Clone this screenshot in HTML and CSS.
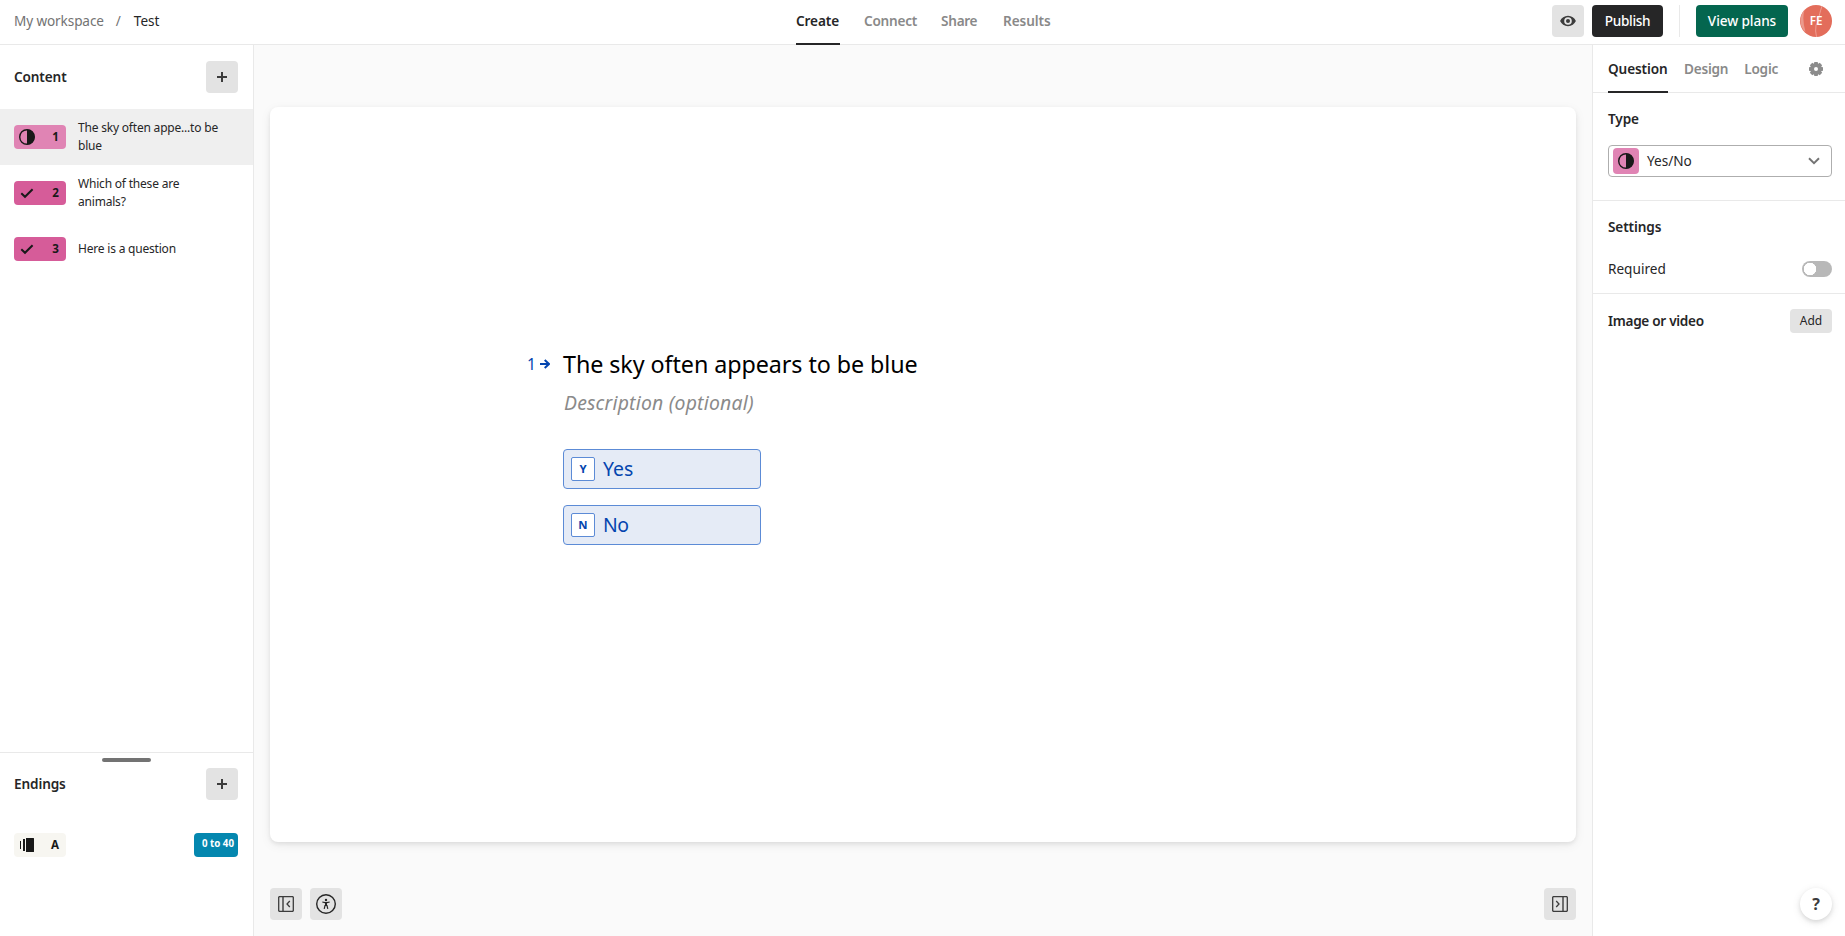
FILE: index.html
```
<!DOCTYPE html>
<html lang="en">
<head>
<meta charset="utf-8">
<title>Test</title>
<link rel="stylesheet" href="styles.css">
</head>
<body>
<svg width="0" height="0" class="defs">
  <symbol id="half" viewBox="0 0 16 16"><circle cx="8" cy="8" r="7.3" fill="none" stroke="#191919" stroke-width="1.4"/><path d="M8 .5a7.5 7.5 0 0 1 0 15z" fill="#191919"/></symbol>
  <symbol id="check" viewBox="0 0 14 12"><path d="M1.3 6.2 5 9.8 12.6 2.3" fill="none" stroke="#191919" stroke-width="2"/></symbol>
  <symbol id="plus" viewBox="0 0 10 10"><path d="M5 0v10M0 5h10" stroke="#3c3c3c" stroke-width="2"/></symbol>
  <symbol id="panel" viewBox="0 0 16 16"><path d="M1.3.7h13.4l.6.6v13.4l-.6.6H1.3l-.6-.6V1.300z" fill="none" stroke="#3c3c3c" stroke-width="1.3"/><path d="M5 1v14" stroke="#3c3c3c" stroke-width="1.4"/><path d="M11.800 5 9 8l2.800 3" fill="none" stroke="#3c3c3c" stroke-width="1.300"/></symbol>
</svg>
<header class="topbar">
  <nav class="crumbs"><span class="muted ws">My workspace</span><span class="slash">/</span><span>Test</span></nav>
  <nav class="tabs">
    <a class="tab active">Create</a><a class="tab">Connect</a><a class="tab share">Share</a><a class="tab results">Results</a>
  </nav>
  <div class="actions">
    <button class="icon-btn"><svg width="16" height="12" viewBox="0 0 16 12"><path fill-rule="evenodd" d="M8 .8c3.600 0 6.500 2.200 7.900 5.200C14.500 9 11.600 11.200 8 11.200S1.500 9 .1 6C1.500 3 4.400.8 8 .8zm0 1.400a3.800 3.800 0 1 0 0 7.600 3.800 3.800 0 0 0 0-7.600z" fill="#3c3c3c"/><circle cx="8" cy="6" r="2" fill="#3c3c3c"/></svg></button>
    <button class="publish">Publish</button>
    <i class="divider"></i>
    <button class="plans">View plans</button>
    <div class="avatar"><svg width="32" height="32" viewBox="0 0 32 32"><circle cx="16" cy="16" r="16" fill="#e36d5b"/><path d="M4.500 5Q1.800 14 5.500 27L3.500 25A16 16 0 0 1 3.500 6z" fill="#eb9a8c"/><path d="M22 1Q19 10 19 13T16 20Q15 26 16.500 32" fill="none" stroke="#eea398" stroke-width=".9"/></svg><span>FE</span></div>
  </div>
</header>
<div class="workspace">
  <aside class="sidebar">
    <section class="content">
      <div class="side-head"><h2>Content</h2><button class="icon-btn"><svg width="10" height="10"><use href="#plus"/></svg></button></div>
      <div class="item selected"><span class="badge light"><svg width="16" height="16"><use href="#half"/></svg><b>1</b></span><p>The sky often appe...to be blue</p></div>
      <div class="item"><span class="badge"><svg class="tick" width="14" height="12"><use href="#check"/></svg><b>2</b></span><p>Which of these are animals?</p></div>
      <div class="item"><span class="badge"><svg class="tick" width="14" height="12"><use href="#check"/></svg><b>3</b></span><p>Here is a question</p></div>
    </section>
    <section class="endings">
      <i class="handle"></i>
      <div class="side-head"><h2>Endings</h2><button class="icon-btn"><svg width="10" height="10"><use href="#plus"/></svg></button></div>
      <div class="ending"><span class="badge cream"><svg width="16" height="14" viewBox="0 0 16 14"><path d="M1 3h1v8H1zM4 1h2v12H4zM7 0h7.500q.5 0 .5.500v13q0 .5-.5.500H7z" fill="#191919"/></svg><b>A</b></span><span class="score">0 to 40</span></div>
    </section>
  </aside>
  <main class="stage">
    <div class="card">
      <div class="question">
        <div class="num">1<svg width="10" height="10" viewBox="0 0 10 10"><path d="M0 5h8.500M4.700 1 9 5 4.700 9" fill="none" stroke="#0445af" stroke-width="2"/></svg></div>
        <div class="body">
          <h1>The sky often appears to be blue</h1>
          <p class="desc">Description (optional)</p>
          <div class="choice"><kbd>Y</kbd><span>Yes</span></div>
          <div class="choice"><kbd>N</kbd><span class="no">No</span></div>
        </div>
      </div>
    </div>
    <div class="tools">
      <button class="icon-btn"><svg width="16" height="16"><use href="#panel"/></svg></button>
      <button class="icon-btn"><svg width="20" height="20" viewBox="0 0 20 20"><circle cx="10" cy="10" r="9.300" fill="none" stroke="#262626" stroke-width="1.400"/><circle cx="10" cy="6" r="1.200" fill="#262626"/><path d="M6.300 8 9 8.600h2L13.700 8M8.200 14.800l.8-3.300h2l.8 3.300" fill="none" stroke="#262626" stroke-width="1.200"/><path d="M9 8.300h2v3.500H9z" fill="#262626"/></svg></button>
      <button class="icon-btn last"><svg class="flip" width="16" height="16"><use href="#panel"/></svg></button>
    </div>
  </main>
  <aside class="props">
    <nav class="ptabs"><a class="tab active">Question</a><a class="tab design">Design</a><a class="tab">Logic</a>
      <svg class="gear" width="14" height="14" viewBox="-7 -7 14 14"><g fill="#8c8c8c"><path id="tooth" d="M-1.700-7h3.400l.6 3h-4.600z"/><use href="#tooth" transform="rotate(45)"/><use href="#tooth" transform="rotate(90)"/><use href="#tooth" transform="rotate(135)"/><use href="#tooth" transform="rotate(180)"/><use href="#tooth" transform="rotate(225)"/><use href="#tooth" transform="rotate(270)"/><use href="#tooth" transform="rotate(315)"/></g><circle r="3.900" fill="none" stroke="#8c8c8c" stroke-width="3.800"/></svg>
    </nav>
    <section class="type"><h2>Type</h2>
      <div class="select"><span class="swatch"><svg width="16" height="16"><use href="#half"/></svg></span><span>Yes/No</span><svg class="chev" width="12" height="8" viewBox="0 0 12 8"><path d="M1 1.300 6 6.200 11 1.300" fill="none" stroke="#737373" stroke-width="1.900"/></svg></div>
    </section>
    <section class="settings"><h2>Settings</h2><div class="row"><span>Required</span><i class="toggle"></i></div></section>
    <section class="media"><h2>Image or video</h2><button class="add">Add</button></section>
    <button class="help">?</button>
  </aside>
</div>
</body>
</html>
```
FILE: styles.css
```
* { box-sizing: border-box; margin: 0; padding: 0; }
body { width: 1845px; height: 936px; display: flex; flex-direction: column; overflow: hidden; background: #fff; color: #262627; font: 13.6px/20px "Noto Sans", sans-serif; }
button { border: 0; font: inherit; color: inherit; }
svg { display: block; flex: none; }
h2 { font-size: 13.6px; font-weight: 600; line-height: 20px; letter-spacing: -.12px; }
.defs { position: absolute; }
.topbar { height: 45px; flex: none; display: grid; grid-template-columns: 796px 1fr auto; border-bottom: 1px solid #e9e9e9; }
.crumbs { display: flex; padding: 11px 0 0 14px; }
.muted { color: #737373; }
.ws { letter-spacing: -.12px; }
.slash { margin: 0 12px 0 12px; color: #737373; width: 6px; }
.tabs { display: flex; gap: 24px; }
.tab { color: #898989; font-weight: 600; letter-spacing: -.23px; position: relative; }
.tabs .tab { height: 45px; padding-top: 11px; }
.tabs .share { width: 38px; letter-spacing: -.3px; }
.tabs .results { letter-spacing: -.1px; }
.tab.active { color: #262627; }
.tabs .active { width: 44px; border-bottom: 2px solid #262627; letter-spacing: -.1px; }
.actions { display: flex; padding: 5px 13px 0 0; }
.icon-btn { width: 32px; height: 32px; border-radius: 4px; background: #e3e3e3; display: flex; align-items: center; justify-content: center; flex: none; }
.publish, .plans { height: 32px; border-radius: 4px; color: #fff; font-weight: 500; text-align: center; }
.publish { width: 71px; margin-left: 8px; background: #262627; letter-spacing: -.3px; }
.plans { width: 92px; background: #04664f; letter-spacing: -.08px; }
.divider { width: 1px; height: 32px; margin: 0 16px; background: #e9e9e9; }
.avatar { width: 32px; height: 32px; margin-left: 12px; display: grid; }
.avatar > * { grid-area: 1 / 1; }
.avatar span { color: #fff; font-size: 11.6px; font-weight: 600; line-height: 31px; text-align: center; z-index: 1; }

.workspace { flex: 1; display: flex; min-height: 0; }
.sidebar { width: 254px; flex: none; border-right: 1px solid #e9e9e9; display: flex; flex-direction: column; }
.content { flex: 1; }
.side-head { display: flex; align-items: center; justify-content: space-between; padding: 0 15px 0 14px; }
.content .side-head { height: 64px; }
.item { height: 56px; display: flex; align-items: center; padding-left: 14px; }
.selected { background: #efefef; }
.item p { width: 150px; margin-left: 12px; padding-bottom: 1px; font-size: 12px; line-height: 18px; letter-spacing: -.2px; }
.badge { width: 52px; height: 24px; border-radius: 4px; background: #d65c99; display: flex; align-items: center; justify-content: space-between; padding: 0 7px 0 5px; flex: none; color: #191919; }
.badge b { font-size: 11.6px; }
.badge.light, .swatch { background: #e084b4; }
.badge.cream { background: #f7f6f1; }
.tick { margin-left: 1px; }
.endings { height: 184px; border-top: 1px solid #e9e9e9; padding-top: 5px; }
.handle { display: block; width: 49px; height: 4px; border-radius: 2px; background: #737373; margin-left: 102px; }
.endings .side-head { margin-top: 6px; }
.ending { display: flex; justify-content: space-between; padding: 0 15px 0 14px; margin-top: 33px; }
.score { width: 44px; height: 24px; border-radius: 4px; background: #0487af; color: #fff; font-size: 9.7px; font-weight: 700; line-height: 22px; padding-left: 8px; white-space: nowrap; }

.stage { flex: 1; background: #fafafa; padding: 62px 16px 16px; display: flex; flex-direction: column; justify-content: space-between; }
.card { height: 735px; background: #fff; border-radius: 8px; box-shadow: 0 2px 4px rgba(0,0,0,.08), 0 3px 12px rgba(0,0,0,.06); }
.question { display: flex; padding: 241px 0 0 257px; color: #0445af; }
.num { width: 36px; display: flex; align-items: center; gap: 4px; height: 32px; font-size: 15.6px; }
h1 { font-size: 23.3px; font-weight: 400; line-height: 32px; color: #000; letter-spacing: -.07px; white-space: nowrap; }
.desc { font-size: 19.4px; line-height: 28px; font-style: italic; color: #8a8a8a; margin: 9px 0 32px 1px; letter-spacing: .2px; }
.choice { width: 198px; height: 40px; margin-bottom: 16px; border: 1px solid #5c8bd6; border-radius: 4px; background: #e5ebf6; display: flex; align-items: center; padding-left: 7px; font-size: 19.4px; }
kbd { width: 24px; height: 24px; margin-right: 8px; border: 1px solid #5c8bd6; border-radius: 2px; background: #fff; font: 700 11.400px/22px "Noto Sans", sans-serif; text-align: center; }
.no { letter-spacing: -.4px; }
.tools { display: flex; gap: 8px; }
.last { margin-left: auto; }
.flip { transform: scaleX(-1); }

.props { width: 253px; flex: none; border-left: 1px solid #e9e9e9; display: flex; flex-direction: column; }
.ptabs { height: 48px; border-bottom: 1px solid #e9e9e9; display: flex; align-items: flex-start; gap: 16px; padding-left: 15px; }
.ptabs .tab { height: 48px; padding-top: 14px; }
.ptabs .active { width: 60px; border-bottom: 2px solid #262627; letter-spacing: -.12px; }
.gear { margin: 17px 22px 0 auto; }
.type { height: 108px; border-bottom: 1px solid #e9e9e9; padding: 16px 13px 0 15px; }
.select { height: 32px; margin-top: 16px; border: 1px solid #aeaeae; border-radius: 4px; display: flex; align-items: center; padding: 0 11px 0 4px; }
.swatch { width: 26px; height: 26px; border-radius: 4px; margin-right: 8px; display: flex; align-items: center; justify-content: center; }
.chev { margin-left: auto; }
.settings { height: 93px; border-bottom: 1px solid #e9e9e9; padding: 16px 13px 0 15px; }
.row { display: flex; align-items: center; justify-content: space-between; margin-top: 22px; }
.toggle { width: 30px; height: 16px; border-radius: 8px; background: radial-gradient(circle at 8px 8px, #fff 6px, #b8b8b8 6.500px); }
.media { display: flex; align-items: center; justify-content: space-between; padding: 15px 13px 0 15px; }
.media h2 { letter-spacing: -.3px; }
.add { width: 42px; height: 24px; border-radius: 4px; background: #e3e3e3; font-size: 12px; }
.help { width: 32px; height: 32px; border-radius: 50%; background: #fff; margin: auto 13px 16px auto; box-shadow: 0 2px 4px rgba(0,0,0,.1), 0 2px 10px rgba(0,0,0,.09); font-size: 16px; font-weight: 700; color: #3c3c3c; }
```
